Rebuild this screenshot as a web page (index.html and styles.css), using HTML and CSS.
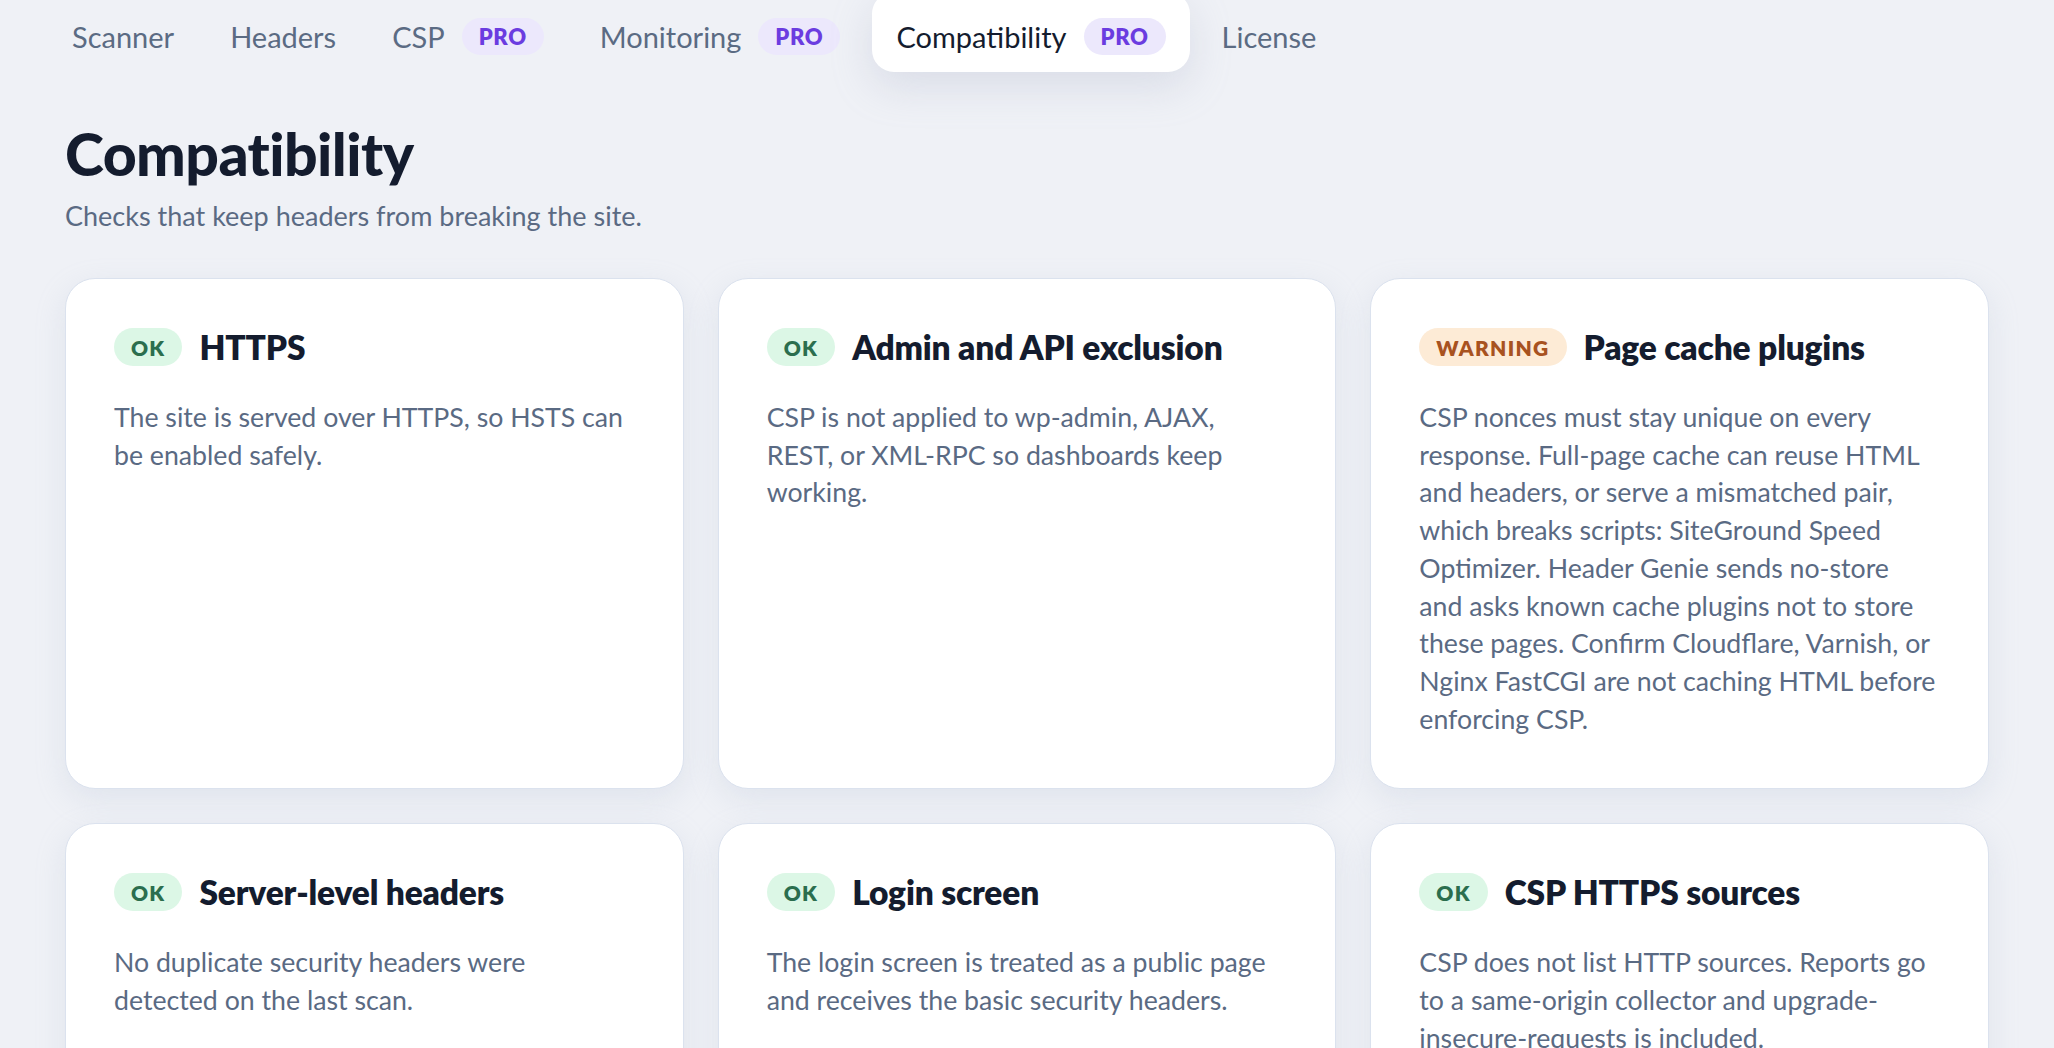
FILE: index.html
```html
<!DOCTYPE html>
<html lang="en">
<head>
<meta charset="utf-8">
<title>Compatibility</title>
<link rel="stylesheet" href="styles.css">
</head>
<body>
<nav class="tabs">
  <a class="tab">Scanner</a>
  <a class="tab">Headers</a>
  <a class="tab">CSP <span class="pro">PRO</span></a>
  <a class="tab">Monitoring <span class="pro">PRO</span></a>
  <a class="tab active">Compatibility <span class="pro">PRO</span></a>
  <a class="tab">License</a>
</nav>
<main class="main">
  <h1 class="title">Compatibility</h1>
  <p class="subtitle">Checks that keep headers from breaking the site.</p>
  <section class="grid">
    <article class="card">
      <div class="card-head"><span class="badge ok">OK</span><h2>HTTPS</h2></div>
      <p class="card-text">The site is served over HTTPS, so HSTS can be enabled safely.</p>
    </article>
    <article class="card">
      <div class="card-head"><span class="badge ok">OK</span><h2>Admin and API exclusion</h2></div>
      <p class="card-text">CSP is not applied to wp-admin, AJAX, REST, or XML-RPC so dashboards keep working.</p>
    </article>
    <article class="card">
      <div class="card-head"><span class="badge warn">WARNING</span><h2>Page cache plugins</h2></div>
      <p class="card-text">CSP nonces must stay unique on every response. Full-page cache can reuse HTML and headers, or serve a mismatched pair, which breaks scripts: SiteGround Speed Optimizer. Header Genie sends no-store<br>and asks known cache plugins not to store these pages. Confirm Cloudflare, Varnish, or Nginx FastCGI are not caching HTML before enforcing CSP.</p>
    </article>
    <article class="card">
      <div class="card-head"><span class="badge ok">OK</span><h2>Server-level headers</h2></div>
      <p class="card-text">No duplicate security headers were detected on the last scan.</p>
    </article>
    <article class="card">
      <div class="card-head"><span class="badge ok">OK</span><h2>Login screen</h2></div>
      <p class="card-text">The login screen is treated as a public page and receives the basic security headers.</p>
    </article>
    <article class="card">
      <div class="card-head"><span class="badge ok">OK</span><h2>CSP HTTPS sources</h2></div>
      <p class="card-text">CSP does not list HTTP sources. Reports go to a same-origin collector and upgrade-insecure-requests is included.</p>
    </article>
  </section>
</main>
</body>
</html>
```
FILE: styles.css
```css
* { box-sizing: border-box; }
html, body { margin: 0; padding: 0; }
body {
  background: #eff1f6;
  font-family: Lato, "Noto Sans", sans-serif;
  color: #5a6a83;
  overflow: hidden;
  height: 1048px;
}
.tabs {
  display: flex;
  align-items: center;
  gap: 8px;
  padding: 0 48px;
  height: 72px;
}
.tab {
  display: flex;
  align-items: center;
  gap: 17px;
  height: 80px;
  margin-top: -8px;
  padding: 8px 24px 0;
  font-size: 29px;
  color: #5b6b83;
  border-radius: 22px;
}
.tab.active {
  background: #ffffff;
  color: #141c2e;
  box-shadow: 0 14px 40px rgba(160, 170, 195, 0.28);
}
.pro {
  display: inline-flex;
  align-items: center;
  height: 37px;
  padding: 0 17px;
  border-radius: 19px;
  background: #ece8fc;
  color: #6b3ce0;
  font-size: 22px;
  font-weight: 800;
  letter-spacing: 0.03em;
}
.main {
  padding: 0 65px;
}
.title {
  margin: 48px 0 0;
  font-size: 59px;
  line-height: 68px;
  font-weight: 900;
  color: #141c2e;
  letter-spacing: -0.01em;
}
.subtitle {
  margin: 11px 0 0;
  font-size: 27px;
  line-height: 34px;
}
.grid {
  display: grid;
  grid-template-columns: repeat(3, 1fr);
  gap: 34px;
  margin-top: 45px;
}
.card {
  background: #ffffff;
  border: 1.5px solid #dbe2ee;
  border-radius: 30px;
  padding: 49px 48px 50px;
  box-shadow: 0 10px 30px rgba(170, 180, 205, 0.22);
}
.card-head {
  display: flex;
  align-items: center;
  gap: 17px;
  height: 38px;
}
.card-head h2 {
  margin: 0;
  font-size: 33.5px;
  font-weight: 800;
  color: #141c2e;
  letter-spacing: -0.005em;
}
.badge {
  display: inline-flex;
  align-items: center;
  height: 38px;
  padding: 0 17px;
  border-radius: 19px;
  font-size: 21px;
  font-weight: 800;
  letter-spacing: 0.06em;
}
.badge.ok { background: #dcf7e6; color: #2b6e4e; }
.badge.warn { background: #fdebd6; color: #a8521f; }
.card-text {
  margin: 33px 0 0;
  font-size: 26.7px;
  line-height: 37.7px;
}
```
